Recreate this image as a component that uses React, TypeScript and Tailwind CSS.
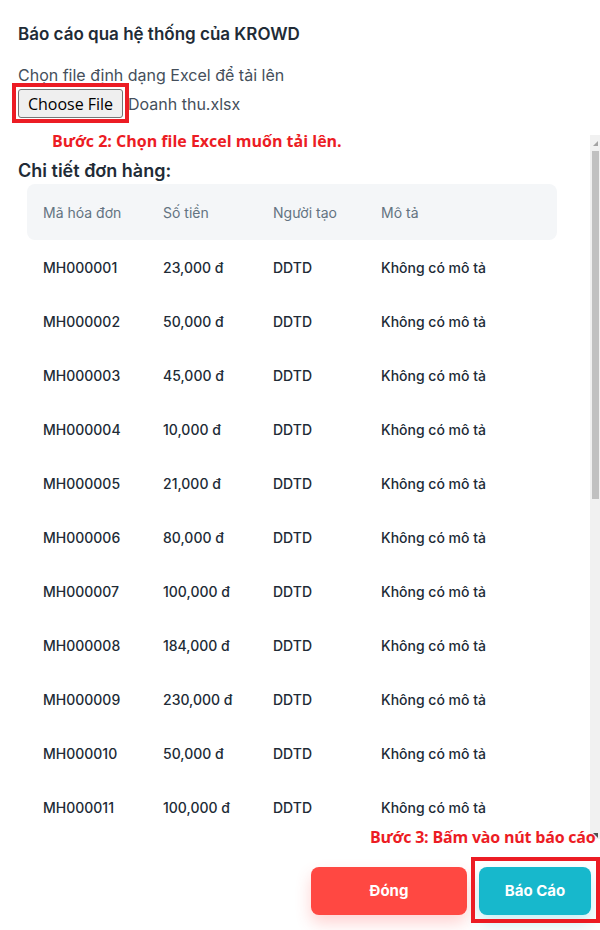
const rows = [
  { id: 'MH000001', amount: '23,000 đ' },
  { id: 'MH000002', amount: '50,000 đ' },
  { id: 'MH000003', amount: '45,000 đ' },
  { id: 'MH000004', amount: '10,000 đ' },
  { id: 'MH000005', amount: '21,000 đ' },
  { id: 'MH000006', amount: '80,000 đ' },
  { id: 'MH000007', amount: '100,000 đ' },
  { id: 'MH000008', amount: '184,000 đ' },
  { id: 'MH000009', amount: '230,000 đ' },
  { id: 'MH000010', amount: '50,000 đ' },
  { id: 'MH000011', amount: '100,000 đ' },
];

export default function App() {
  return (
    <div className="relative w-[600px] h-[930px] overflow-hidden bg-white font-['Inter',sans-serif] text-[#212b36]">
      {/* Header */}
      <div className="px-[18px] pt-[22px]">
        <h2 className="text-[17px] leading-6 font-semibold">Báo cáo qua hệ thống của KROWD</h2>
        <p className="mt-[17px] text-[16px] leading-6 text-[#454f5b]">Chọn file định dạng Excel để tải lên</p>
        <div className="mt-[2px] flex items-center">
          <span className="h-[29px] w-[105px] flex items-center justify-center bg-[#efefef] border border-[#767676] rounded-[3px] text-[16px] text-black font-['Open_Sans',sans-serif]">
            Choose File
          </span>
          <span className="ml-[5px] text-[16px] text-[#454f5b]">Doanh thu.xlsx</span>
        </div>
      </div>

      {/* Scroll area */}
      <div className="mt-[17px] h-[704px] flex">
        <div className="flex-1 overflow-hidden">
          <h3 className="pl-[18px] pt-[24px] text-[18px] leading-6 font-semibold">Chi tiết đơn hàng:</h3>
          <div className="ml-[27px] w-[530px] mt-[1px]">
            <div className="h-[56px] grid grid-cols-[120px_110px_108px_1fr] items-center px-[16px] bg-[#f4f6f8] rounded-lg text-[14px] text-[#637381]">
              <span>Mã hóa đơn</span>
              <span>Số tiền</span>
              <span>Người tạo</span>
              <span>Mô tả</span>
            </div>
            {rows.map((r) => (
              <div key={r.id} className="h-[54px] grid grid-cols-[120px_110px_108px_1fr] items-center px-[16px] text-[14px] font-medium">
                <span>{r.id}</span>
                <span>{r.amount}</span>
                <span>DDTD</span>
                <span>Không có mô tả</span>
              </div>
            ))}
          </div>
        </div>
        {/* Scrollbar */}
        <div className="w-[10px] bg-[#f1f1f1] flex flex-col items-center">
          <svg width="7" height="16" viewBox="0 0 7 16" className="shrink-0">
            <path d="M1 11 L6 11 L6 6 Z" fill="#a3a3a3" />
          </svg>
          <div className="w-[7px] h-[348px] bg-[#c1c1c1]" />
          <div className="flex-1" />
          <svg width="7" height="8" viewBox="0 0 7 8" className="shrink-0">
            <path d="M1 2 L6 2 L6 7 Z" fill="#505050" />
          </svg>
        </div>
      </div>

      {/* Footer */}
      <div className="mt-[28px] pr-[9px] flex justify-end gap-[12px]">
        <button className="w-[156px] h-[48px] rounded-lg bg-[#ff4842] text-white text-[15px] font-bold shadow-[0_8px_16px_rgba(255,72,66,0.24)]">
          Đóng
        </button>
        <button className="w-[112px] h-[48px] rounded-lg bg-[#17b8cc] text-white text-[15px] font-bold shadow-[0_8px_16px_rgba(23,184,204,0.24)]">
          Báo Cáo
        </button>
      </div>

      {/* Annotations */}
      <div className="absolute left-[12px] top-[83px] w-[117px] h-[40px] border-4 border-[#ec1c24]" />
      <div className="absolute left-[52px] top-[130px] text-[16px] leading-[22px] font-bold text-[#ec1c24] font-['Open_Sans',sans-serif]">
        Bước 2: Chọn file Excel muốn tải lên.
      </div>
      <div className="absolute left-[370px] top-[826px] text-[16px] leading-[22px] font-bold text-[#ec1c24] font-['Open_Sans',sans-serif] tracking-[-0.2px]">
        Bước 3: Bấm vào nút báo cáo
      </div>
      <div className="absolute left-[471px] top-[857px] w-[129px] h-[66px] border-4 border-[#ec1c24]" />
    </div>
  );
}
